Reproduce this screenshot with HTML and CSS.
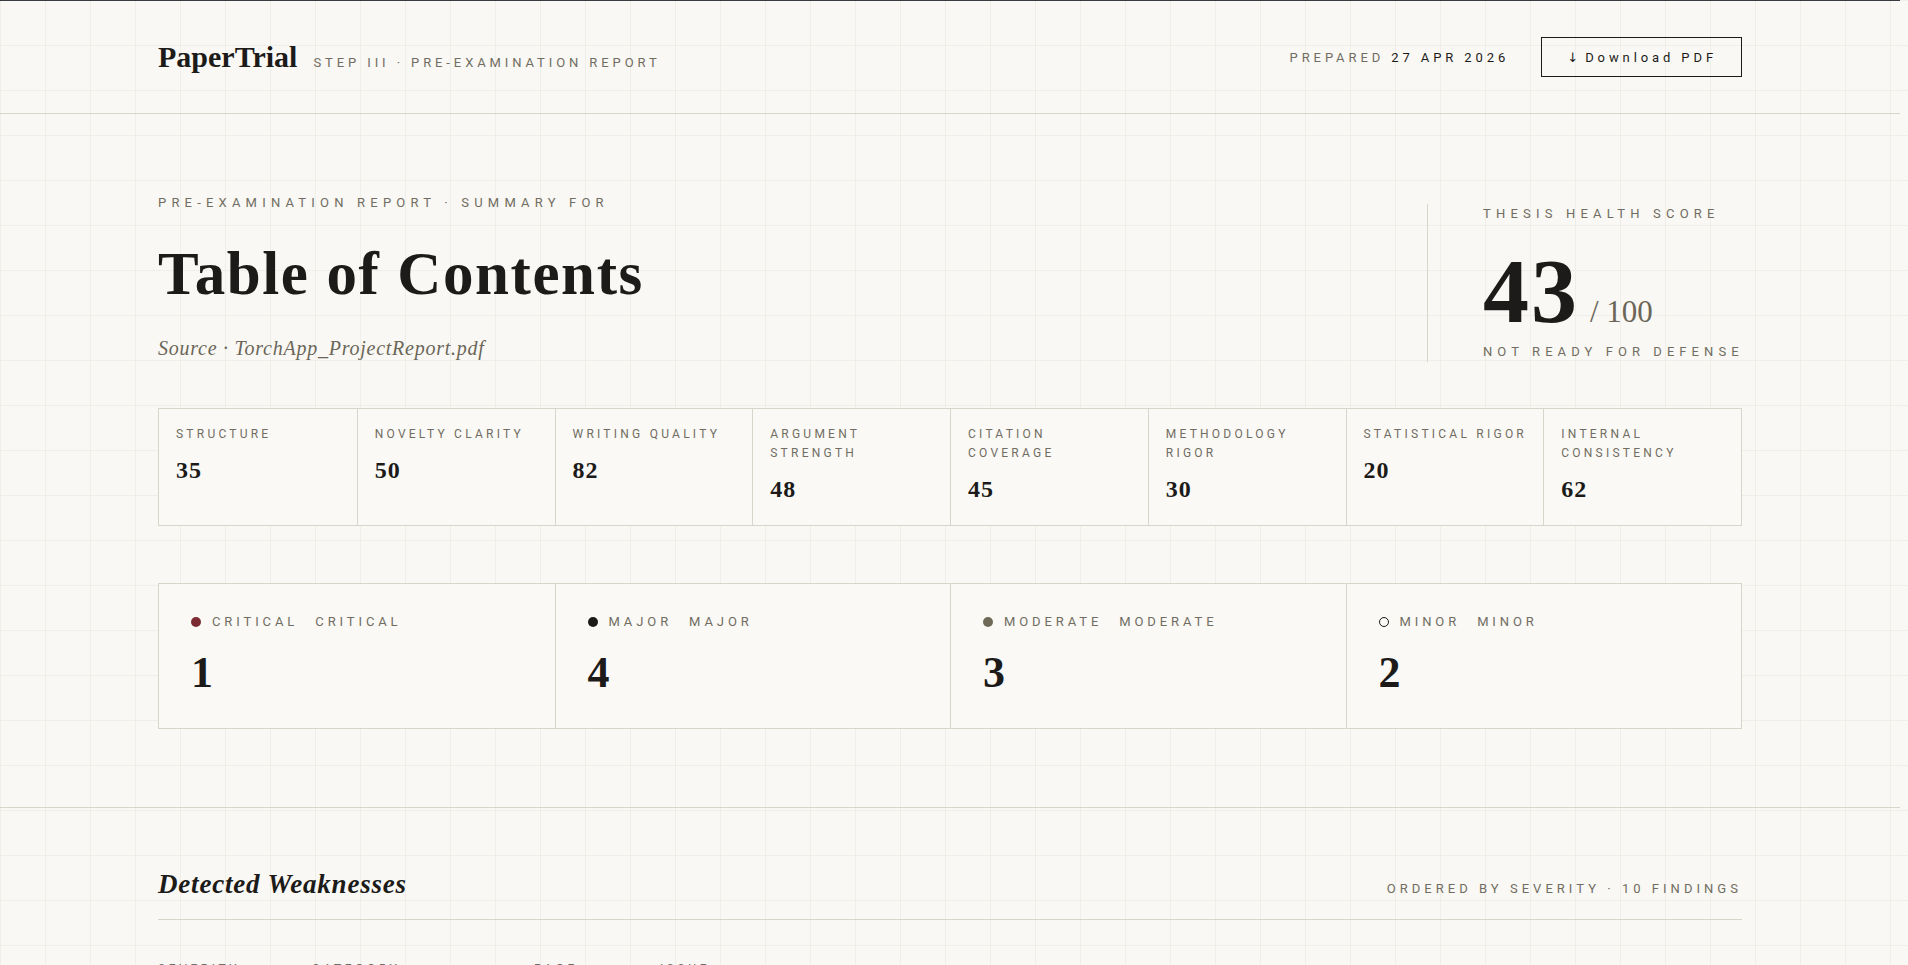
FILE: index.html
```html
<!DOCTYPE html>
<html lang="en">
  <head>
    <meta charset="UTF-8" />
    <meta name="viewport" content="width=device-width, initial-scale=1.0" />
    <title>PaperTrial · Pre-examination report</title>
    <link rel="stylesheet" href="styles.css">
  </head>

  <body>
    <header class="topbar">
      <div class="wrap topbar-inner">
        <div class="brand">
          <span class="logo">PaperTrial</span>
          <span class="step">Step III · Pre-examination report</span>
        </div>
        <div class="actions">
          <span class="prepared">Prepared <b>27 Apr 2026</b></span>
          <button class="download"><span class="arrow">↓</span> Download PDF</button>
        </div>
      </div>
    </header>

    <section class="summary">
      <div class="wrap">
        <div class="hero">
          <div class="hero-title">
            <p class="eyebrow">Pre-examination report · Summary for</p>
            <h1>Table of Contents</h1>
            <p class="source">Source · TorchApp_ProjectReport.pdf</p>
          </div>
          <div class="health">
            <p class="eyebrow">Thesis health score</p>
            <div class="score"><span class="big">43</span><span class="of">/ 100</span></div>
            <p class="eyebrow verdict">Not ready for defense</p>
          </div>
        </div>

        <div class="scores">
          <div class="cell"><span class="label">Structure</span><span class="value">35</span></div>
          <div class="cell"><span class="label">Novelty clarity</span><span class="value">50</span></div>
          <div class="cell"><span class="label">Writing quality</span><span class="value">82</span></div>
          <div class="cell"><span class="label">Argument strength</span><span class="value">48</span></div>
          <div class="cell"><span class="label">Citation coverage</span><span class="value">45</span></div>
          <div class="cell"><span class="label">Methodology rigor</span><span class="value">30</span></div>
          <div class="cell"><span class="label">Statistical rigor</span><span class="value">20</span></div>
          <div class="cell"><span class="label">Internal consistency</span><span class="value">62</span></div>
        </div>

        <div class="severity">
          <div class="sev">
            <div class="sev-label"><span class="dot critical"></span>Critical <span class="tag">Critical</span></div>
            <div class="count">1</div>
          </div>
          <div class="sev">
            <div class="sev-label"><span class="dot major"></span>Major <span class="tag">Major</span></div>
            <div class="count">4</div>
          </div>
          <div class="sev">
            <div class="sev-label"><span class="dot moderate"></span>Moderate <span class="tag">Moderate</span></div>
            <div class="count">3</div>
          </div>
          <div class="sev">
            <div class="sev-label"><span class="dot minor"></span>Minor <span class="tag">Minor</span></div>
            <div class="count">2</div>
          </div>
        </div>
      </div>
    </section>

    <section class="findings">
      <div class="wrap">
        <div class="findings-head">
          <h2>Detected Weaknesses</h2>
          <span class="meta">Ordered by severity · 10 findings</span>
        </div>
        <div class="table-head">
          <span>Severity</span>
          <span>Category</span>
          <span>Page</span>
          <span>Issue</span>
        </div>
      </div>
    </section>
  </body>
</html>
```

FILE: styles.css
```css
body {
  margin: 0;
  padding-right: 8px;
  background-color: #f9f8f4;
  background-image:
    linear-gradient(to right, #f0eee8 1px, transparent 1px),
    linear-gradient(to bottom, #f0eee8 1px, transparent 1px);
  background-size: 45px 45px;
  color: #1c1b19;
  font-family: Roboto, "Liberation Sans", sans-serif;
}

.wrap {
  width: 1584px;
  margin: 0 auto;
}

p {
  margin: 0;
}

/* top bar */
.topbar {
  border-top: 1px solid #3a3c44;
  border-bottom: 1px solid #d8d5cb;
}

.topbar-inner {
  height: 112px;
  display: flex;
  align-items: center;
  justify-content: space-between;
}

.brand {
  display: flex;
  align-items: baseline;
  gap: 16px;
}

.logo {
  font-family: "Liberation Serif", serif;
  font-weight: 700;
  font-size: 30px;
}

.step,
.prepared {
  font-size: 13px;
  letter-spacing: 0.3em;
  text-transform: uppercase;
  color: #716d62;
}

.actions {
  display: flex;
  align-items: center;
  gap: 32px;
}

.prepared b {
  font-weight: 400;
  color: #1c1b19;
}

.download {
  height: 40px;
  padding: 0 24px 0 25px;
  background: transparent;
  border: 1px solid #1c1b19;
  border-radius: 0;
  color: #1c1b19;
  font-family: Roboto, "Liberation Sans", sans-serif;
  font-size: 13px;
  letter-spacing: 0.3em;
}

.download .arrow {
  font-family: "DejaVu Sans", sans-serif;
  font-size: 13px;
  letter-spacing: 0;
}

/* summary */
.summary {
  padding: 79px 0 78px;
  border-bottom: 1px solid #d8d5cb;
}

.hero {
  display: flex;
  justify-content: space-between;
  align-items: flex-end;
}

.eyebrow {
  font-size: 13px;
  line-height: 20px;
  letter-spacing: 0.4em;
  text-transform: uppercase;
  white-space: nowrap;
  color: #716d62;
}

h1 {
  margin: 27px 0 0;
  font-family: "Liberation Serif", serif;
  font-size: 61px;
  line-height: 68px;
  letter-spacing: 1.6px;
  font-weight: 700;
}

.source {
  margin-top: 26px;
  font-family: "Liberation Serif", serif;
  font-style: italic;
  font-size: 20px;
  line-height: 28px;
  letter-spacing: 0.75px;
  color: #6b6658;
}

.health {
  width: 315px;
  box-sizing: border-box;
  padding-left: 55px;
  border-left: 1px solid #d8d5cb;
}

.score {
  margin-top: 21px;
  display: flex;
  align-items: baseline;
  font-family: "Liberation Serif", serif;
}

.score .big {
  font-size: 92px;
  line-height: 92px;
  font-weight: 700;
  letter-spacing: 2px;
}

.score .of {
  margin-left: 11px;
  font-size: 31px;
  color: #6b6658;
}

.verdict {
  margin-top: 5px;
  letter-spacing: 0.39em;
}

/* sub-scores */
.scores {
  margin-top: 46px;
  display: grid;
  grid-template-columns: repeat(8, 1fr);
  border: 1px solid #d8d5cb;
  background: #faf9f6;
}

.cell {
  padding: 16px 10px 21px 17px;
  display: flex;
  flex-direction: column;
}

.cell + .cell {
  border-left: 1px solid #d8d5cb;
}

.label {
  font-size: 12px;
  line-height: 19px;
  letter-spacing: 0.27em;
  text-transform: uppercase;
  color: #716d62;
}

.value {
  margin-top: 12px;
  font-family: "Liberation Serif", serif;
  font-size: 24px;
  line-height: 29px;
  font-weight: 700;
  letter-spacing: 1px;
}

/* severity counts */
.severity {
  margin-top: 57px;
  display: grid;
  grid-template-columns: repeat(4, 1fr);
  border: 1px solid #d8d5cb;
  background: #faf9f6;
}

.sev {
  padding: 28px 32px 33px;
}

.sev + .sev {
  border-left: 1px solid #d8d5cb;
}

.sev-label {
  display: flex;
  align-items: center;
  gap: 11px;
  font-size: 13px;
  line-height: 20px;
  letter-spacing: 0.3em;
  text-transform: uppercase;
  color: #716d62;
}

.sev-label .tag {
  margin-left: 6px;
}

.dot {
  width: 10px;
  height: 10px;
  border-radius: 50%;
  box-sizing: border-box;
}

.dot.critical { background: #7c2b32; }
.dot.major { background: #1c1b19; }
.dot.moderate { background: #6f6a57; }
.dot.minor { border: 1.5px solid #1c1b19; }

.count {
  margin-top: 19px;
  font-family: "Liberation Serif", serif;
  font-size: 44px;
  line-height: 44px;
  font-weight: 700;
}

/* findings */
.findings {
  padding: 61px 0 120px;
}

.findings-head {
  display: flex;
  justify-content: space-between;
  align-items: baseline;
  padding-bottom: 19px;
  border-bottom: 1px solid #d8d5cb;
}

h2 {
  margin: 0;
  font-family: "Liberation Serif", serif;
  font-style: italic;
  font-weight: 700;
  font-size: 27px;
  line-height: 31px;
  letter-spacing: 0.8px;
}

.meta {
  font-size: 13px;
  letter-spacing: 0.31em;
  text-transform: uppercase;
  color: #716d62;
}

.table-head {
  padding-top: 39px;
  display: grid;
  grid-template-columns: 154px 222px 126px 1fr;
  font-size: 12px;
  line-height: 20px;
  letter-spacing: 0.3em;
  text-transform: uppercase;
  color: #716d62;
}
```
